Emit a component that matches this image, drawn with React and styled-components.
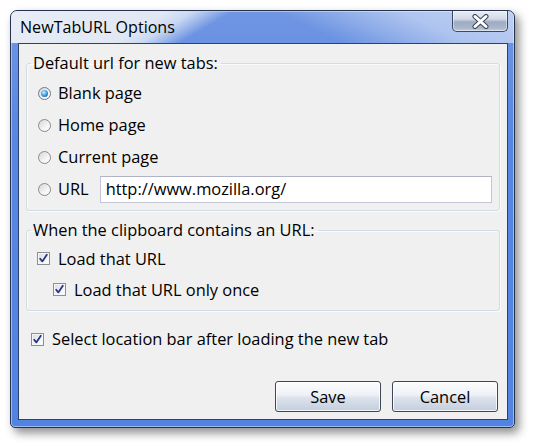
import React from 'react';
import styled, { createGlobalStyle } from 'styled-components';

const Global = createGlobalStyle`
  html, body {
    margin: 0;
    padding: 0;
    background: #ffffff;
  }
  body {
    font-family: "Open Sans", "Noto Sans", "DejaVu Sans", sans-serif;
    font-size: 16.4px;
    color: #000;
  }
`

const Page = styled.div`
  width: 534px;
  height: 446px;
  padding: 10px 0 0 10px;
  box-sizing: border-box;
`

const Window = styled.div`
  width: 505px;
  height: 418px;
  box-sizing: border-box;
  display: flex;
  flex-direction: column;
  border: 1px solid #26334d;
  border-radius: 7px 7px 5px 5px;
  background: linear-gradient(to bottom, #7096e2 0, #5787e2 30%, #5283e0 100%);
  box-shadow: 4px 5px 10px rgba(0, 0, 0, 0.45), inset 0 0 0 1px rgba(190, 210, 245, 0.7);
  overflow: hidden;
`

const TitleBar = styled.div`
  height: 32px;
  flex: none;
  display: flex;
  justify-content: space-between;
  align-items: flex-start;
  background:
    linear-gradient(25.8deg, rgba(255, 255, 255, 0) 58%, rgba(255, 255, 255, 0.45) 80%, rgba(255, 255, 255, 0.55) 100%),
    linear-gradient(149deg, #e8edf6 0%, #e1e8f4 28%, #c9d8f2 33%, rgba(86, 134, 224, 0) 40%);
`

const Title = styled.div`
  padding: 6px 0 0 9px;
  font-size: 16.1px;
  line-height: 20px;
  color: #000;
`

const CloseButton = styled.div`
  width: 56px;
  height: 21px;
  margin: 0 6px 0 0;
  box-sizing: border-box;
  display: flex;
  align-items: center;
  justify-content: center;
  border: 1px solid #3b4863;
  border-top: none;
  border-radius: 0 0 5px 5px;
  background: linear-gradient(to bottom, #e8edf4 0, #d3dbe7 40%, #9eabc3 55%, #a9b6cc 85%, #c4cfe0 100%);
  box-shadow: inset 0 0 0 1px rgba(255, 255, 255, 0.45);
`

const Panel = styled.div`
  flex: 1;
  margin: 0 6px 7px 7px;
  display: flex;
  flex-direction: column;
  background: #f0f0f0;
  border: 1px solid #2e4070;
  padding: 9px 7px 7px 7px;
`

const Group = styled.fieldset`
  margin: 0;
  padding: ${p => p.$pad};
  border: 1px solid #d5dbe2;
  border-radius: 3px;
  box-shadow: inset 1px 1px 0 #fbfbfb, 1px 1px 0 #fbfbfb;
  & + & {
    margin-top: 9px;
  }
`

const Legend = styled.legend`
  padding: 0 3px 0 2px;
  margin-left: 4px;
  line-height: 20px;
`

const Row = styled.label`
  display: flex;
  align-items: center;
  height: ${p => p.$h || 32}px;
  padding-left: ${p => p.$indent}px;
  line-height: 20px;
`

const RadioDot = styled.span`
  width: 13px;
  height: 13px;
  flex: none;
  box-sizing: border-box;
  border-radius: 50%;
  border: 1px solid ${p => (p.$checked ? '#6a7a8e' : '#8a8a8a')};
  background: linear-gradient(135deg, #d6d6d6 0, #f4f4f4 60%, #ffffff 100%);
  display: flex;
  align-items: center;
  justify-content: center;
  margin-right: 7px;
  &::after {
    content: '';
    width: 7px;
    height: 7px;
    border-radius: 50%;
    display: ${p => (p.$checked ? 'block' : 'none')};
    background: radial-gradient(circle at 40% 35%, #d9f3ff 0, #5fb6ef 35%, #1f63b8 80%, #173f80 100%);
  }
`

const Box = styled.span`
  width: 13px;
  height: 13px;
  flex: none;
  box-sizing: border-box;
  border: 1px solid #8e8f8f;
  background: linear-gradient(135deg, #dadada 0, #f2f2f2 55%, #ffffff 100%);
  box-shadow: inset 0 0 0 1px #f6f6f6;
  display: flex;
  align-items: center;
  justify-content: center;
  margin-right: ${p => p.$gap}px;
`

const UrlInput = styled.div`
  flex: 1;
  height: 27px;
  margin: 0 7px 0 11px;
  box-sizing: border-box;
  border: 1px solid #c3c6d6;
  border-top-color: #b1b4c6;
  background: #fff;
  padding: 0 5px;
  display: flex;
  align-items: center;
`

const Spacer = styled.div`
  flex: 1;
`

const Buttons = styled.div`
  display: flex;
  justify-content: flex-end;
  gap: 11px;
  padding-right: 2px;
`

const Button = styled.div`
  width: 106px;
  height: 31px;
  box-sizing: border-box;
  border: 1px solid #3f4757;
  border-radius: 3px;
  display: flex;
  align-items: center;
  justify-content: center;
  background: linear-gradient(to bottom, #fbfcfd 0, #eef1f6 45%, #dbe2ec 55%, #c3cedd 100%);
  box-shadow: inset 0 0 0 1px rgba(255, 255, 255, 0.8);
`

const Check = () => (
  <svg width="11" height="11" viewBox="0 0 11 11">
    <path d="M2.2 5.8 L4.3 8.4 L8.8 1.8" fill="none" stroke="#24358c" strokeWidth="1.8" strokeLinecap="round" strokeLinejoin="round" />
  </svg>
);

const CloseX = () => (
  <svg width="17" height="15" viewBox="0 0 17 15">
    <path d="M3 2.5 L14 12.5 M14 2.5 L3 12.5" stroke="#3b4458" strokeWidth="5" strokeLinecap="round" />
    <path d="M3 2.5 L14 12.5 M14 2.5 L3 12.5" stroke="#ffffff" strokeWidth="3" strokeLinecap="round" />
  </svg>
);

const radios = ['Blank page', 'Home page', 'Current page'];

export default function App() {
  return (
    <Page>
      <Global />
      <Window>
        <TitleBar>
          <Title>NewTabURL Options</Title>
          <CloseButton><CloseX /></CloseButton>
        </TitleBar>
        <Panel>
          <Group $pad="4px 0 5px 0">
            <Legend>Default url for new tabs:</Legend>
            {radios.map((r, i) => (
              <Row key={r} $indent={11}>
                <RadioDot $checked={i === 0} />
                {r}
              </Row>
            ))}
            <Row $indent={11}>
              <RadioDot />
              URL
              <UrlInput>http://www.mozilla.org/</UrlInput>
            </Row>
          </Group>
          <Group $pad="3px 0 5px 0">
            <Legend>When the clipboard contains an URL:</Legend>
            <Row $indent={10} $h={31}>
              <Box $gap={8}><Check /></Box>
              Load that URL
            </Row>
            <Row $indent={26} $h={31}>
              <Box $gap={8}><Check /></Box>
              Load that URL only once
            </Row>
          </Group>
          <Row $indent={5} style={{ marginTop: 12 }}>
            <Box $gap={8}><Check /></Box>
            Select location bar after loading the new tab
          </Row>
          <Spacer />
          <Buttons>
            <Button>Save</Button>
            <Button>Cancel</Button>
          </Buttons>
        </Panel>
      </Window>
    </Page>
  );
}
